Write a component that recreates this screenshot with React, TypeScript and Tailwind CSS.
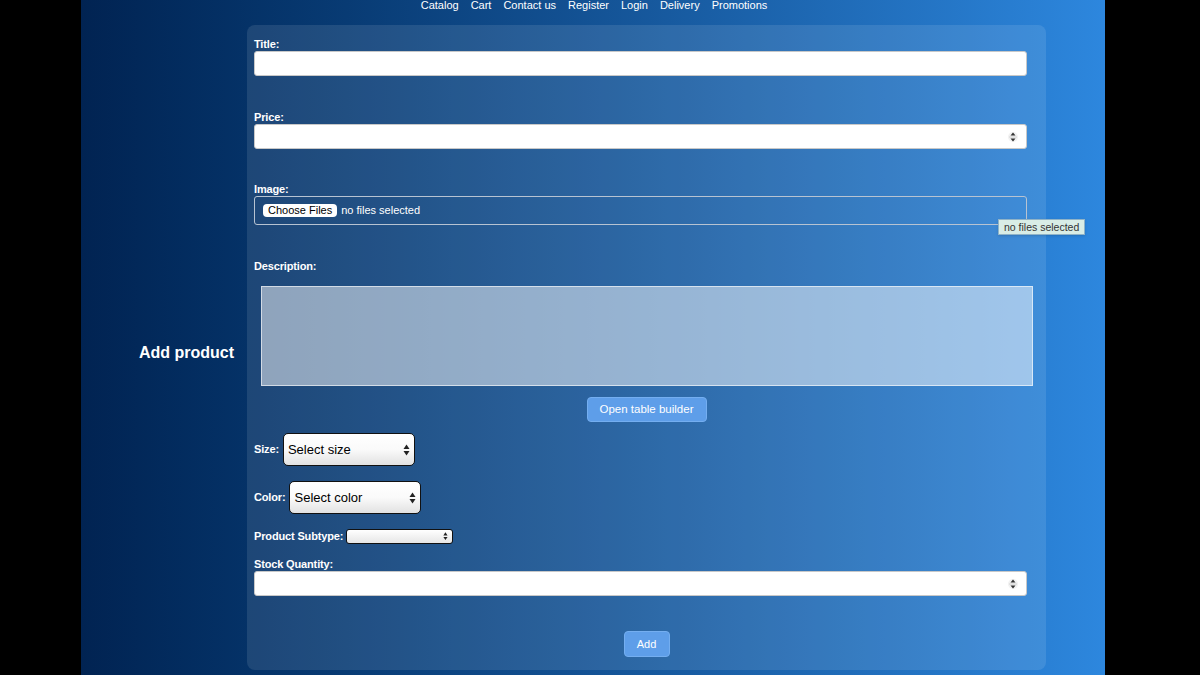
import React from "react";

const font = { fontFamily: '"Liberation Sans", Arial, Helvetica, sans-serif' };

function Spinner() {
  return (
    <svg width="10" height="14" viewBox="0 0 10 14" className="mr-[8px]">
      <circle cx="5" cy="7" r="5" fill="#f2f2f2" />
      <path d="M2.5 5.5 L5 2.5 L7.5 5.5 Z" fill="#333" />
      <path d="M2.5 8.5 L5 11.5 L7.5 8.5 Z" fill="#333" />
      <line x1="1" y1="7" x2="9" y2="7" stroke="#ccc" strokeWidth="0.8" />
    </svg>
  );
}

function SelectArrows({ small }: { small?: boolean }) {
  const s = small ? 0.7 : 1;
  return (
    <svg width={7 * s} height={12 * s} viewBox="0 0 7 12">
      <path d="M0.5 5 L3.5 0.5 L6.5 5 Z" fill="#222" />
      <path d="M0.5 7 L3.5 11.5 L6.5 7 Z" fill="#222" />
    </svg>
  );
}

function Select({ label, width, small }: { label: string; width: number; small?: boolean }) {
  return (
    <div
      className={
        small
          ? "flex items-center justify-end h-[15px] rounded-[3px] border border-[#111] bg-gradient-to-b from-white to-[#e6e6e6] pr-[4px]"
          : "flex items-center justify-between h-[33px] rounded-[5px] border-[1.5px] border-[#111] bg-gradient-to-b from-white via-[#fafafa] to-[#e2e2e2] pl-[4px] pr-[4px] text-[13px] text-black"
      }
      style={{ width }}
    >
      {!small && <span>{label}</span>}
      <SelectArrows small={small} />
    </div>
  );
}

function NumInput() {
  return (
    <div className="flex items-center justify-end w-[773px] h-[25px] bg-white rounded-[3px] border border-[#c8c8c8]">
      <Spinner />
    </div>
  );
}

function Label({ children, className = "" }: { children: React.ReactNode; className?: string }) {
  return (
    <div className={"text-[11px] leading-[13px] font-bold text-white tracking-[-0.15px] " + className}>
      {children}
    </div>
  );
}

export default function App() {
  return (
    <div className="w-[1200px] h-[675px] bg-black flex overflow-hidden" style={font}>
      <div className="ml-[81px] w-[1024px] h-[675px] bg-gradient-to-r from-[#012352] to-[#2d87de] flex flex-col">
        <nav className="h-[25px] flex justify-center gap-[12px] text-[11px] leading-[11px] text-white pl-[2px]">
          <span>Catalog</span>
          <span>Cart</span>
          <span>Contact us</span>
          <span>Register</span>
          <span>Login</span>
          <span>Delivery</span>
          <span>Promotions</span>
        </nav>
        <div className="flex items-center">
          <div className="w-[166px] text-right pr-[13px] pt-[10px] text-[16px] font-bold text-white">Add product</div>
          <div className="w-[799px] h-[645px] bg-white/10 rounded-[8px] pl-[7px] pt-[13px] flex flex-col">
            <Label>Title:</Label>
            <div className="w-[773px] h-[25px] bg-white rounded-[3px] border border-[#c8c8c8]" />

            <Label className="mt-[35px]">Price:</Label>
            <NumInput />

            <Label className="mt-[34px]">Image:</Label>
            <div className="relative w-[773px] h-[29px] rounded-[3px] border border-[#b7c3d2] flex items-center pl-[8px] text-[11px] text-white">
              <span className="bg-white text-black rounded-[4px] px-[5px] h-[13px] leading-[13px] text-[11px]">Choose Files</span>
              <span className="ml-[4px]">no files selected</span>
              <div className="absolute left-[743px] top-[22px] bg-[#d9ede6] border border-[#8fb3c8] text-[#333] text-[10.5px] leading-[14px] px-[5px] whitespace-nowrap shadow-sm">
                no files selected
              </div>
            </div>

            <Label className="mt-[35px]">Description:</Label>
            <div className="ml-[7px] mt-[13px] w-[772px] h-[100px] bg-white/50 border border-white/60" />

            <div className="flex justify-center pr-[7px] mt-[11px]">
              <div className="w-[120px] h-[25px] rounded-[4px] bg-[#5e9ee9] border border-[#74aef0] text-white text-[11.5px] flex items-center justify-center">
                Open table builder
              </div>
            </div>

            <div className="flex items-center gap-[4px] mt-[11px]">
              <Label>Size:</Label>
              <Select label="Select size" width={132} />
            </div>
            <div className="flex items-center gap-[4px] mt-[15px]">
              <Label>Color:</Label>
              <Select label="Select color" width={132} />
            </div>
            <div className="flex items-center gap-[3px] mt-[15px]">
              <Label>Product Subtype:</Label>
              <Select label="" width={107} small />
            </div>

            <Label className="mt-[14px]">Stock Quantity:</Label>
            <NumInput />

            <div className="flex justify-center pr-[7px] mt-[35px]">
              <div className="w-[46px] h-[26px] rounded-[4px] bg-[#5e9ee9] border border-[#74aef0] text-white text-[11px] flex items-center justify-center">
                Add
              </div>
            </div>
          </div>
        </div>
      </div>
    </div>
  );
}
